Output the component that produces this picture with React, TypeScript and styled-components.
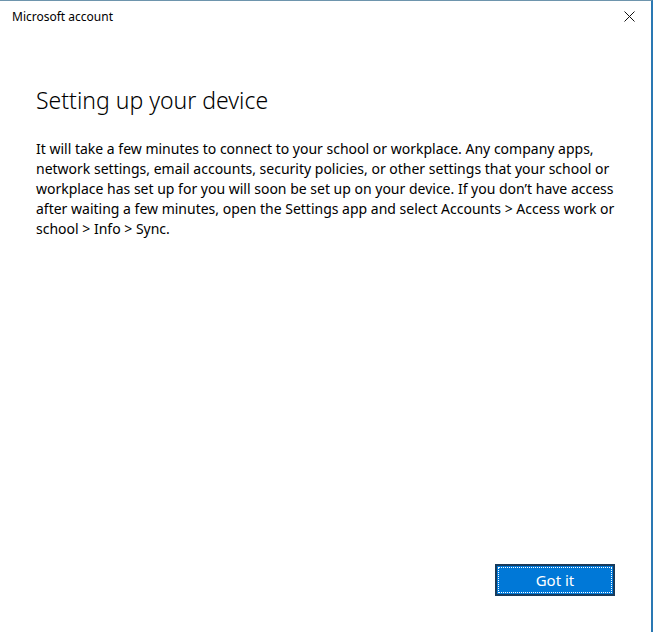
import * as React from "react";
import styled, { createGlobalStyle } from "styled-components";

const GlobalStyle = createGlobalStyle`
  html, body {
    margin: 0;
    padding: 0;
    background: #ffffff;
  }
  #root {
    height: 100vh;
  }
`;

const Window = styled.div`
  box-sizing: border-box;
  height: 632px;
  width: 653px;
  display: flex;
  flex-direction: column;
  background: #ffffff;
  border-top: 1px solid #6e95ad;
  border-right: 2px solid #2a78b3;
  font-family: "Segoe UI", "Noto Sans", sans-serif;
  color: #000000;
`;

const TitleBar = styled.div`
  display: flex;
  align-items: center;
  justify-content: space-between;
  height: 30px;
  padding: 0 12px 0 12px;
`;

const WindowTitle = styled.span`
  font-size: 12px;
  color: #000;
`;

const CloseButton = styled.button`
  display: flex;
  align-items: center;
  justify-content: center;
  width: 20px;
  height: 20px;
  padding: 0;
  border: none;
  background: transparent;
`;

const Content = styled.main`
  flex: 1;
  display: flex;
  flex-direction: column;
  padding: 53px 36px 0 36px;
`;

const Heading = styled.h1`
  margin: 0;
  font-size: 23px;
  font-weight: 300;
  line-height: 32px;
  color: #000;
`;

const Body = styled.p`
  margin: 23px 0 0 0;
  font-size: 14px;
  line-height: 20px;
  color: #000;
`;

const Line = styled.span`
  display: block;
  white-space: nowrap;
`;

const Footer = styled.div`
  display: flex;
  justify-content: flex-end;
  padding: 0 36px 36px 0;
`;

const PrimaryButton = styled.button`
  box-sizing: border-box;
  width: 120px;
  height: 32px;
  background: #0078d7;
  border: 2px solid #183a5a;
  outline: 1px dotted #ffffff;
  outline-offset: -4px;
  color: #ffffff;
  font-family: inherit;
  font-size: 15px;
  padding: 0;
`;

const lines = [
  "It will take a few minutes to connect to your school or workplace. Any company apps,",
  "network settings, email accounts, security policies, or other settings that your school or",
  "workplace has set up for you will soon be set up on your device. If you don\u2019t have access",
  "after waiting a few minutes, open the Settings app and select Accounts > Access work or",
  "school > Info > Sync.",
];

export default function App() {
  return (
    <>
      <GlobalStyle />
      <Window>
        <TitleBar>
          <WindowTitle>Microsoft account</WindowTitle>
          <CloseButton aria-label="Close">
            <svg width="11" height="11" viewBox="0 0 11 11">
              <path d="M0.5 0.5 L10.5 10.5 M10.5 0.5 L0.5 10.5" stroke="#111" strokeWidth="1" />
            </svg>
          </CloseButton>
        </TitleBar>
        <Content>
          <Heading>Setting up your device</Heading>
          <Body>
            {lines.map((l) => (
              <Line key={l}>{l}</Line>
            ))}
          </Body>
        </Content>
        <Footer>
          <PrimaryButton>Got it</PrimaryButton>
        </Footer>
      </Window>
    </>
  );
}
